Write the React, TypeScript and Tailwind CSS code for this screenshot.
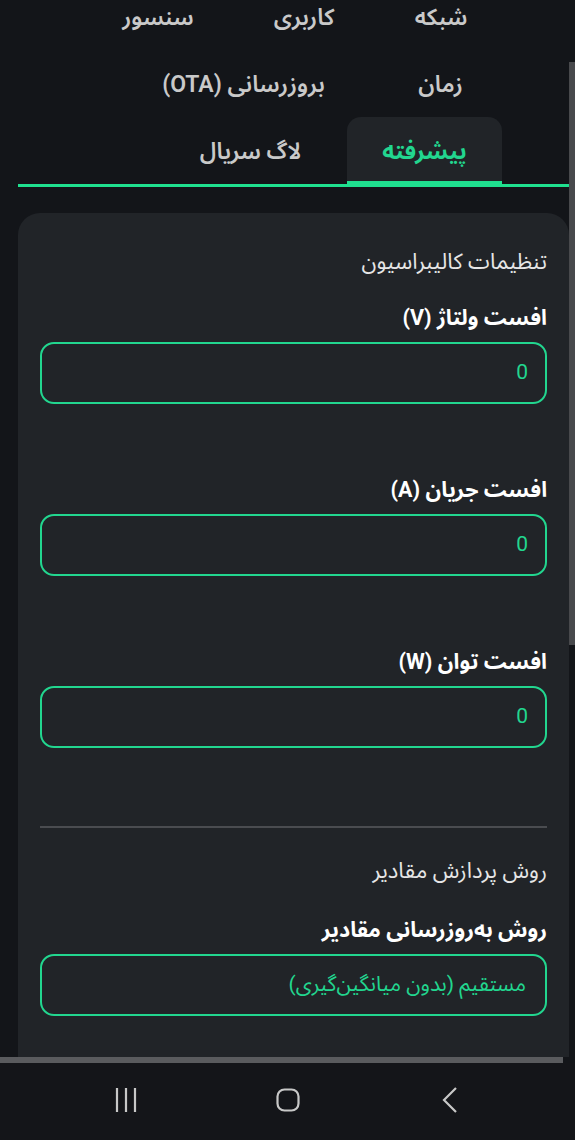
import React from "react";

const tabs = [
  { title: "شبکه", w: "w-[122px]" },
  { title: "کاربری", w: "w-[136px]" },
  { title: "سنسور", w: "w-[140px]" },
  { title: "زمان", w: "w-[123px]" },
  { title: "بروزرسانی (OTA)", w: "w-[255px]" },
  { title: "پیشرفته", w: "w-[155px]", active: true },
  { title: "لاگ سریال", w: "w-[177px]" },
];

const offsets = [
  { label: "افست ولتاژ (V)", value: "0" },
  { label: "افست جریان (A)", value: "0" },
  { label: "افست توان (W)", value: "0" },
];

function Field({ label, value }: { label: string; value: string }) {
  return (
    <div>
      <label className="block text-[21.5px] leading-[28px] font-bold text-white">{label}</label>
      <div className="mt-[10px] flex h-[62px] items-center rounded-[14px] border-2 border-[#22d68f] px-[17px] text-[21px] text-[#22d68f]">
        {value}
      </div>
    </div>
  );
}

export default function App() {
  return (
    <div
      dir="rtl"
      className="flex h-[1140px] w-[575px] flex-col overflow-hidden bg-[#131519]"
      style={{ fontFamily: '"Roboto", "Noto Sans Arabic", "DejaVu Sans", sans-serif' }}
    >
      <div className="flex flex-1 overflow-hidden">
        {/* overlay scrollbar */}
        <div className="w-[6px] shrink-0">
          <div className="mt-[62px] h-[583px] bg-[#48494c]" />
        </div>

        <div className="flex-1 pl-[18px]">
          <nav className="-mt-[17px] flex flex-wrap gap-x-[8px] border-b-[3px] border-[#1fe08f] pr-[67px]">
            {tabs.map((tab, i) => (
              <button
                key={i}
                className={
                  tab.active
                    ? `${tab.w} flex h-[67px] items-center justify-center rounded-t-[14px] border-b-[3px] border-[#1fe08f] bg-[#212428] pt-[7px] text-[23px] font-bold text-[#22d68f]`
                    : `${tab.w} flex h-[67px] items-center justify-center border-b-[3px] border-transparent pt-[7px] text-[23px] font-semibold text-[#c9c9c9]`
                }
              >
                {tab.title}
              </button>
            ))}
          </nav>

          <div className="mt-[26px] h-[900px] rounded-t-[22px] bg-[#212428] px-[22px] pt-[35px]">
            <h3 className="text-[22px] leading-[28px] text-[#e6e6e6]">تنظیمات کالیبراسیون</h3>
            <div className="mt-[28px] flex flex-col gap-[72px]">
              {offsets.map((f, i) => (
                <Field key={i} label={f.label} value={f.value} />
              ))}
            </div>
            <div className="mt-[78px] h-[2px] bg-[#4a4c50]" />
            <h3 className="mt-[29px] text-[22px] leading-[28px] text-[#e6e6e6]">روش پردازش مقادیر</h3>
            <label className="mt-[31px] block text-[21.5px] leading-[28px] font-bold text-white">
              روش به‌روزرسانی مقادیر
            </label>
            <div className="mt-[10px] flex h-[62px] items-center rounded-[14px] border-2 border-[#22d68f] px-[19px] text-[21px] text-[#22d68f]">
              مستقیم (بدون میانگین‌گیری)
            </div>
          </div>
        </div>
      </div>

      {/* horizontal scrollbar */}
      <div className="flex h-[6px] shrink-0 justify-end">
        <div className="w-[563px] bg-[#5a5b5e]" />
      </div>

      {/* system nav bar */}
      <div dir="ltr" className="flex h-[77px] shrink-0 items-center justify-center gap-[138px] bg-[#141519] pb-[4px]">
        <svg width="24" height="26" viewBox="0 0 24 26" fill="none" stroke="#c8c8c8" strokeWidth="2.2">
          <path d="M3 1v24M12 1v24M21 1v24" />
        </svg>
        <svg width="24" height="24" viewBox="0 0 24 24" fill="none" stroke="#c8c8c8" strokeWidth="2.2">
          <rect x="1.5" y="1.5" width="21" height="21" rx="7" />
        </svg>
        <svg width="24" height="26" viewBox="0 0 24 26" fill="none" stroke="#c8c8c8" strokeWidth="2.2">
          <path d="M18 1L6 13l12 12" />
        </svg>
      </div>
    </div>
  );
}
